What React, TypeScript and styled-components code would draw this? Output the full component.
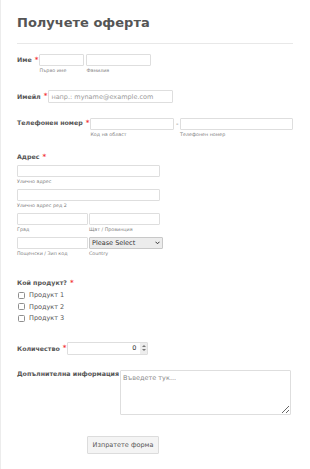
import React from "react";
import styled, { createGlobalStyle } from "styled-components";

const Global = createGlobalStyle`
  html, body { margin: 0; padding: 0; background: #fff; }
  body { font-family: "DejaVu Sans", Verdana, sans-serif; color: #555; }
  * { box-sizing: border-box; }
`;

const Page = styled.div`
  width: 310px;
  min-height: 469px;
  border-left: 1px solid #ececec;
  padding: 15px 17px 0 16px;
  font-size: 6px;
  line-height: 1;
`;

const Title = styled.h1`
  margin: 0;
  font-size: 13px;
  line-height: 16px;
  font-weight: bold;
  color: #555;
`;

const Divider = styled.div`
  margin-top: 12px;
  height: 1px;
  background: #e8e8e8;
`;

const Row = styled.div<{ $mt: number }>`
  display: flex;
  align-items: flex-start;
  margin-top: ${(p) => p.$mt}px;
`;

const Block = styled.div<{ $mt: number }>`
  display: flex;
  margin-top: ${(p) => p.$mt}px;
`;

const Label = styled.span<{ $lh?: number }>`
  flex-shrink: 0;
  font-size: 6.3px;
  font-weight: bold;
  color: #555;
  white-space: nowrap;
  line-height: ${(p) => p.$lh ?? 12}px;
`;

const Star = styled.span<{ $lh?: number }>`
  flex-shrink: 0;
  color: #f23a3c;
  font-size: 7px;
  font-weight: bold;
  margin: 0 1px 0 3px;
  line-height: ${(p) => p.$lh ?? 12}px;
`;

const Cell = styled.div<{ $ml?: number }>`
  display: flex;
  flex-direction: column;
  flex-shrink: 0;
  margin-left: ${(p) => p.$ml ?? 0}px;
`;

const Input = styled.input<{ $w: number; $h?: number }>`
  display: block;
  flex-shrink: 0;
  width: ${(p) => p.$w}px;
  height: ${(p) => p.$h ?? 12}px;
  border: 1px solid #dedede;
  border-radius: 1px;
  background: #fff;
  padding: 0 2px;
  margin: 0;
  font-family: "DejaVu Sans", Verdana, sans-serif;
  font-size: 6.5px;
  color: #555;
  outline: none;
  &::placeholder { color: #999; }
`;

const SubLabel = styled.span`
  font-size: 4.8px;
  line-height: 7px;
  margin-top: 1px;
  color: #808080;
  white-space: nowrap;
`;

const Dash = styled.span`
  font-size: 7px;
  line-height: 12px;
  width: 8px;
  text-align: center;
  color: #777;
`;

const SelectWrap = styled.div`
  position: relative;
  width: 74px;
  height: 12px;
`;

const Select = styled.select`
  display: block;
  appearance: none;
  -webkit-appearance: none;
  width: 100%;
  height: 100%;
  border: 1px solid #c8c8c8;
  border-radius: 1px;
  background: #ececec;
  padding: 0 2px;
  margin: 0;
  font-family: "DejaVu Sans", Verdana, sans-serif;
  font-size: 6.5px;
  font-weight: 500;
  color: #333;
  outline: none;
`;

const Chevron = styled.svg`
  position: absolute;
  right: 3px;
  top: 4px;
  width: 5px;
  height: 4px;
  pointer-events: none;
`;

const Options = styled.div`
  display: flex;
  flex-direction: column;
  margin-top: 2.5px;
`;

const Option = styled.div`
  display: flex;
  align-items: center;
  height: 11.5px;
  font-size: 6.5px;
  color: #555;
  padding-left: 1px;
`;

const Box = styled.span`
  width: 7px;
  height: 7px;
  border: 1px solid #8f8f8f;
  border-radius: 1.5px;
  margin-right: 4px;
  background: #fff;
`;

const Qty = styled.div`
  display: flex;
  flex-shrink: 0;
  width: 81px;
  height: 13px;
  border: 1px solid #dedede;
  border-radius: 1px;
  background: #fff;
`;

const QtyValue = styled.span`
  flex: 1;
  text-align: right;
  font-size: 6.5px;
  line-height: 11px;
  color: #333;
  padding-right: 4px;
`;

const Spinner = styled.div`
  width: 7px;
  height: 100%;
  background: #ededed;
  display: flex;
  align-items: center;
  justify-content: center;
`;

const TextArea = styled.textarea`
  display: block;
  flex-shrink: 0;
  width: 171px;
  height: 45px;
  border: 1px solid #dedede;
  border-radius: 1px;
  padding: 3px 2px;
  margin: 0 0 0 1px;
  font-family: "DejaVu Sans", Verdana, sans-serif;
  font-size: 6.5px;
  color: #555;
  outline: none;
  &::placeholder { color: #888; }
`;

const Button = styled.button`
  display: block;
  margin: 21px 0 0 70px;
  width: 72px;
  height: 18px;
  border: 1px solid #dcdcdc;
  border-radius: 1px;
  background: #f4f4f4;
  font-family: "DejaVu Sans", Verdana, sans-serif;
  font-size: 6.5px;
  color: #555;
  padding: 0;
`;

export default function App() {
  return (
    <>
      <Global />
      <Page>
        <Title>Получете оферта</Title>
        <Divider />

        <Row $mt={10}>
          <Label>Име</Label>
          <Star>*</Star>
          <Cell>
            <Input $w={45} />
            <SubLabel>Първо име</SubLabel>
          </Cell>
          <Cell $ml={2}>
            <Input $w={65} />
            <SubLabel>Фамилия</SubLabel>
          </Cell>
        </Row>

        <Row $mt={16}>
          <Label $lh={13}>Имейл</Label>
          <Star $lh={13}>*</Star>
          <Input $w={125} $h={13} placeholder="напр.: myname@example.com" />
        </Row>

        <Row $mt={15}>
          <Label $lh={10}>Телефонен номер</Label>
          <Star $lh={10}>*</Star>
          <Cell>
            <Input $w={84} />
            <SubLabel>Код на област</SubLabel>
          </Cell>
          <Dash>-</Dash>
          <Cell>
            <Input $w={113} />
            <SubLabel>Телефонен номер</SubLabel>
          </Cell>
        </Row>

        <Block $mt={15}>
          <Label $lh={8}>Адрес</Label>
          <Star $lh={8}>*</Star>
        </Block>
        <Row $mt={4}>
          <Cell>
            <Input $w={143} />
            <SubLabel>Улично адрес</SubLabel>
          </Cell>
        </Row>
        <Row $mt={4}>
          <Cell>
            <Input $w={143} />
            <SubLabel>Улично адрес ред 2</SubLabel>
          </Cell>
        </Row>
        <Row $mt={4}>
          <Cell>
            <Input $w={71} />
            <SubLabel>Град</SubLabel>
          </Cell>
          <Cell $ml={1}>
            <Input $w={71} />
            <SubLabel>Щат / Провинция</SubLabel>
          </Cell>
        </Row>
        <Row $mt={4}>
          <Cell>
            <Input $w={71} />
            <SubLabel>Пощенски / Зип код</SubLabel>
          </Cell>
          <Cell $ml={1}>
            <SelectWrap>
              <Select defaultValue="">
                <option value="">Please Select</option>
              </Select>
              <Chevron viewBox="0 0 10 8">
                <path d="M1 1.5 L5 5.5 L9 1.5" fill="none" stroke="#333" strokeWidth="2" />
              </Chevron>
            </SelectWrap>
            <SubLabel>Country</SubLabel>
          </Cell>
        </Row>

        <Block $mt={22}>
          <Label $lh={8}>Кой продукт?</Label>
          <Star $lh={8}>*</Star>
        </Block>
        <Options>
          <Option><Box />Продукт 1</Option>
          <Option><Box />Продукт 2</Option>
          <Option><Box />Продукт 3</Option>
        </Options>

        <Row $mt={17.5}>
          <Label $lh={13}>Количество</Label>
          <Star $lh={13}>*</Star>
          <Qty>
            <QtyValue>0</QtyValue>
            <Spinner>
              <svg width="4" height="8" viewBox="0 0 4 8">
                <path d="M0 3 L2 1 L4 3 Z" fill="#777" />
                <path d="M0 5 L2 7 L4 5 Z" fill="#777" />
              </svg>
            </Spinner>
          </Qty>
        </Row>

        <Row $mt={15}>
          <Label $lh={8}>Допълнителна информация</Label>
          <TextArea placeholder="Въведете тук..." />
        </Row>

        <Button>Изпратете форма</Button>
      </Page>
    </>
  );
}
